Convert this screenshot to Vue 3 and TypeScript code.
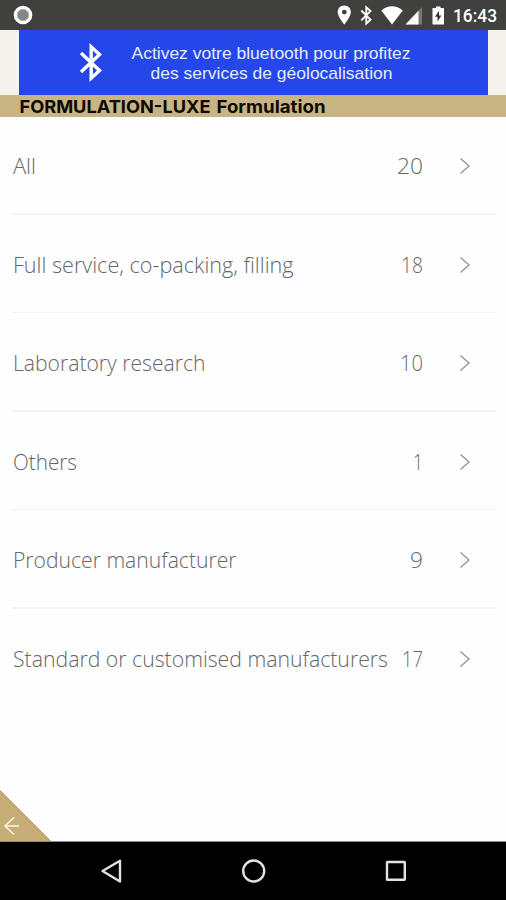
<script setup lang="ts">
interface Category {
  label: string
  count: number
  width: number
  countWidth: number
}

// width and countWidth: rendered length of each text, in pixels
const categories: Category[] = [
  { label: 'All', count: 20, width: 23, countWidth: 26 },
  { label: 'Full service, co-packing, filling', count: 18, width: 280.5, countWidth: 22 },
  { label: 'Laboratory research', count: 10, width: 192.5, countWidth: 23 },
  { label: 'Others', count: 1, width: 64, countWidth: 10 },
  { label: 'Producer manufacturer', count: 9, width: 223.5, countWidth: 13 },
  { label: 'Standard or customised manufacturers', count: 17, width: 375, countWidth: 21 },
]
</script>

<template>
  <div class="screen">
    <header class="status">
      <svg class="record" width="22" height="22" viewBox="0 0 22 22">
        <circle cx="11" cy="11" r="7.7" fill="#858585" stroke="#fff" stroke-width="3.2" />
        <circle cx="11" cy="11" r="5.7" fill="none" stroke="#b5b5b5" stroke-width="1" />
      </svg>
      <svg class="indicators" width="115" height="30" viewBox="0 0 115 30">
        <path fill="#fff" fill-rule="evenodd" d="M14.3 5.5c-3.8 0-6.6 2.8-6.6 6.5 0 4.8 6.6 12.5 6.6 12.5s6.6-7.7 6.6-12.5c0-3.700-2.800-6.500-6.600-6.500zm0 4.200a2.400 2.400 0 1 1 0 4.800 2.400 2.400 0 0 1 0-4.800z" />
        <path fill="none" stroke="#fff" stroke-width="1.900" d="M31.300 10.500l9.200 9.200-4.200 3.900V7.400l4.200 3.700-9.200 9.200" />
        <path fill="#fff" d="M51.300 10.400Q62 2 72.800 10.400L62 24.400z" />
        <path fill="#777775" d="M92 7v17.500H75.500z" />
        <path fill="#fff" d="M88.500 10.800v13.700h-13z" />
        <path fill="#fff" d="M102.500 8h3.500V6.400h4.500V8h3.500v16.500h-11.500z" />
        <path fill="#30302e" d="M109 10.800l-4 6h2.500v4.700l3.900-6.100H109z" />
      </svg>
      <svg class="clock" width="48" height="30" viewBox="0 0 48 30">
        <text x="0" y="22.300" textLength="44" lengthAdjust="spacingAndGlyphs">16:43</text>
      </svg>
    </header>

    <section class="banner-strip">
      <div class="banner">
        <svg class="bluetooth" width="24" height="44" viewBox="0 0 24 44">
          <path d="M2 12L20.500 29.500l-8.300 7.700V5.800l8.300 7.700L2 31" />
        </svg>
        <svg class="banner-copy" width="282" height="65" viewBox="0 0 282 65">
          <text x="0.500" y="28.500" textLength="279" lengthAdjust="spacingAndGlyphs">Activez votre bluetooth pour profitez</text>
          <text x="19.500" y="49.300" textLength="242" lengthAdjust="spacingAndGlyphs">des services de géolocalisation</text>
        </svg>
      </div>
    </section>

    <h1 class="title">
      <svg width="310" height="21" viewBox="0 0 310 21">
        <text x="0.500" y="17.600" textLength="191" lengthAdjust="spacingAndGlyphs">FORMULATION-LUXE</text>
        <text x="197.500" y="17.600" textLength="109" lengthAdjust="spacingAndGlyphs">Formulation</text>
      </svg>
    </h1>

    <main class="list">
      <div v-for="item in categories" :key="item.label" class="row">
        <svg class="label" :width="item.width + 2" height="40">
          <text x="0" y="28" :textLength="item.width" lengthAdjust="spacingAndGlyphs">{{ item.label }}</text>
        </svg>
        <svg class="count" :width="item.countWidth + 2" height="40">
          <text x="1" y="28" :textLength="item.countWidth" lengthAdjust="spacingAndGlyphs">{{ item.count }}</text>
        </svg>
        <svg class="chevron" width="12" height="18" viewBox="0 0 12 18">
          <path d="M1.500 1.500L10 9l-8.500 7.500" />
        </svg>
      </div>
    </main>

    <footer class="bottom">
      <svg class="back" width="51" height="51" viewBox="0 0 51 51">
        <path fill="#c7ae76" d="M0 0l51 51H0z" />
        <path fill="none" stroke="#b49c5d" d="M0 .5L50.500 51" />
        <path fill="none" stroke="#fff5e8" stroke-width="1.500" d="M19 36H5M14 27.500L5 36l9 8.500" />
      </svg>
    </footer>

    <nav class="nav">
      <svg width="24" height="26" viewBox="0 0 24 26">
        <path d="M21 2.700v20.800L3.500 13z" />
      </svg>
      <svg width="26" height="26" viewBox="0 0 26 26">
        <circle cx="12.700" cy="13" r="10.500" />
      </svg>
      <svg width="24" height="26" viewBox="0 0 24 26">
        <rect x="3" y="4" width="17.800" height="17.800" rx=".5" />
      </svg>
    </nav>
  </div>
</template>

<style>
body {
  background: #fff;
}
</style>

<style scoped>
.screen {
  width: 506px;
  height: 900px;
  display: flex;
  flex-direction: column;
  overflow: hidden;
  background: #fefefe;
  font-family: "Liberation Sans", sans-serif;
}
svg {
  display: block;
  flex: none;
  overflow: visible;
}
.status {
  height: 30px;
  display: flex;
  align-items: center;
  background: #40403e;
}
.record {
  margin-left: 12px;
}
.indicators {
  margin-left: 296px;
}
.clock {
  margin-left: 8px;
  font: 500 18px Roboto, sans-serif;
  fill: #fff;
}
.banner-strip {
  height: 65px;
  padding: 0 18px 0 19px;
  background: #f6f3ed;
}
.banner {
  height: 65px;
  display: flex;
  align-items: center;
  background: #2546e8;
}
.bluetooth {
  margin: 0 28px 0 60px;
  fill: none;
  stroke: #fff;
  stroke-width: 3.400;
}
.banner-copy {
  font-size: 17px;
  fill: #e5eaff;
}
.title {
  height: 22px;
  margin: 0;
  padding-left: 19px;
  background: #c9b483;
  font: 700 18px Inter, sans-serif;
  fill: #0c0a05;
}
.list {
  padding: 0 10px 0 12px;
}
.row {
  height: 98.500px;
  box-sizing: border-box;
  display: flex;
  align-items: center;
  position: relative;
  font: 300 22.500px "Open Sans", sans-serif;
  fill: #666;
}
.row:not(:last-child)::after {
  content: "";
  position: absolute;
  inset: auto 0 1px 0;
  height: 1.500px;
  background: #f4f4f2;
}
.label {
  margin-left: 1px;
}
.count {
  margin-left: auto;
}
.chevron {
  margin: 0 25px 0 35px;
  fill: none;
  stroke: #939393;
  stroke-width: 1.300;
}
.bottom {
  flex: 1;
  display: flex;
  align-items: flex-end;
  border-bottom: 1px solid #8b8f8e;
}
.nav {
  height: 58px;
  display: flex;
  align-items: center;
  justify-content: space-between;
  padding: 0 98px 0 99px;
  background: #000;
  fill: none;
  stroke: #e2e2e2;
  stroke-width: 2.400;
  stroke-linejoin: round;
}
</style>
